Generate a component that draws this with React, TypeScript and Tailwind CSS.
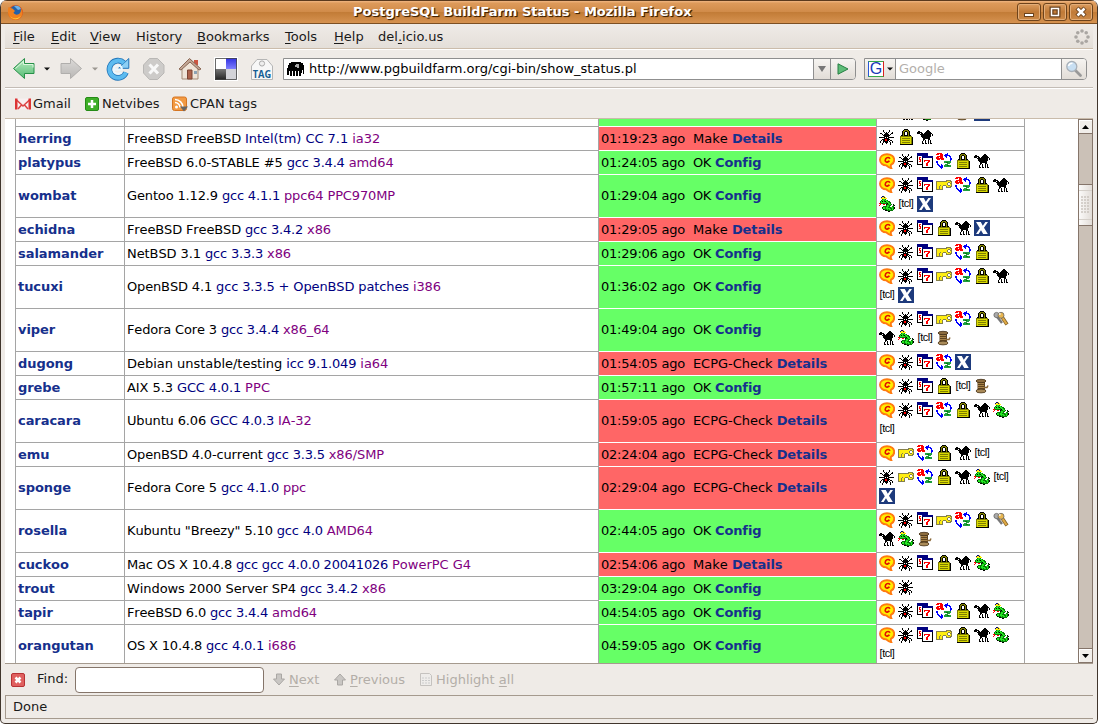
import React from "react";

type Palette = Record<string, string>;

const PALETTE: Palette = {
  "#": "#000000",
  r: "#ff0000",
  o: "#808000",
  y: "#ffee10",
  Y: "#d9d900",
  n: "#000080",
  w: "#ffffff",
  g: "#85804a",
  s: "#c0c0c0",
  b: "#0000ff",
  l: "#22e822",
  d: "#087808",
  t: "#20a040",
};

function Pixels({ rows }: { rows: string[] }) {
  const rects: React.ReactElement[] = [];
  rows.forEach((row, y) => {
    let x = 0;
    while (x < row.length) {
      const c = row[x];
      let end = x + 1;
      while (end < row.length && row[end] === c) end++;
      if (PALETTE[c]) {
        rects.push(<rect key={`${x}-${y}`} x={x} y={y} width={end - x} height={1} fill={PALETTE[c]} />);
      }
      x = end;
    }
  });
  return (
    <svg width="16" height="16" viewBox="0 0 16 16" shapeRendering="crispEdges" className="block shrink-0">
      {rects}
    </svg>
  );
}

const SPIDER = [
  "................",
  "....#.....#.....",
  "....#.....#.....",
  ".....#.#.#...#..",
  ".##...###...##..",
  "...#.#####.#....",
  "....#######.....",
  ".....#####......",
  "######.#.######.",
  ".....#####......",
  "...###rr###.....",
  "..#.##rr##.##...",
  ".#..#####.#..#..",
  ".#..#.###..#.#..",
  "...#...#...#....",
  "...#.......#....",
];

const CAMEL = [
  "................",
  "..........##....",
  ".##......####...",
  "#####...######..",
  "###.##.########.",
  "...###########.#",
  "....##########.#",
  "....##########..",
  ".....########...",
  "......#######...",
  "......##...##...",
  "......#.#..#.#..",
  ".....#..#..#.#..",
  ".....#..#..#.#..",
  ".....##.##.#.##.",
  "................",
];

const LOCK = [
  "......####......",
  ".....#oooo#.....",
  "....#oo##oo#....",
  "....#o#..#o#....",
  "....#o#..#o#....",
  "....#o#..#o#....",
  "...##o####o##...",
  "..oooooooooooo..",
  "..oYYYYYYYYYYo#.",
  "..oYooooooooYo#.",
  "..oYYYYYYYYYYo#.",
  "..oYooooooooYo#.",
  "..oYYYYYYYYYYo#.",
  "..oYooooooooYo#.",
  "..oYYYYYYYYYYo#.",
  "..#############.",
];

const CALENDAR = [
  "nnnnnnnnnnn.....",
  "nnnnnnnnnnn.....",
  "nnnnnnnnnnn.....",
  "#wwwwnnnnnnnnnnn",
  "#wrrwnnnnnnnnnnn",
  "#wrww#wwwwwwwww#",
  "#wrrw#wwwwwwwww#",
  "#wwrw#wrrrrrrww#",
  "#wrrw#wrwwwrrww#",
  "#wwww#wwwwrrwww#",
  "#wwww#wwwrrwwww#",
  "######wwwrrwwww#",
  ".....#wwwrrwwww#",
  ".....#wwwwwwwww#",
  ".....###########",
  "................",
];

const KEY = [
  "................",
  "................",
  "................",
  "..........ggggg.",
  "gggggggggggyyygg",
  "gyyyyyyyyyyyggyg",
  "gyyyyyyyyyygwwgg",
  "gyyyyyyyyyygwwyg",
  "gyyygyygggyyggyg",
  "gyygyyg...gyyygg",
  "gyygyyg...ggggg.",
  "gyygyyg.........",
  "ggggggg.........",
  "................",
  "................",
  "................",
];

const SORT = [
  ".rrrrr.....b....",
  "rrr.rrr..bbb....",
  "....rrr.bbbbbb..",
  ".rrrrrr..bb..bb.",
  "rrr.rrr...b...b.",
  "rrrrrrrr......bb",
  ".rrr.rrr......bb",
  "..............b.",
  "bb......ttttttt.",
  "bb......ttddttt.",
  ".b.........ttt..",
  ".bb..b...ttt....",
  "..bb.bb.tttddtt.",
  "...bbbb.ttttttt.",
  "....bbb.........",
  ".....b..........",
];

const SNAKE = [
  "...nny..........",
  "..nyyny.........",
  "..yyyyyy........",
  "...dlld.........",
  "..dlldlld.......",
  ".dl#ld#lldd.....",
  ".dllllldlldd....",
  "rrdddddd#lld....",
  ".r..rr.#ddlld.#.",
  "r......dlldd..d#",
  "....ddddlld..dd.",
  "...#lldlldddlld#",
  "...dlldllllddld#",
  "....#dddldlldld.",
  "......##dddddd..",
  ".........##.....",
];

function Balloon() {
  return (
    <svg width="16" height="16" viewBox="0 0 16 16" className="block shrink-0">
      <path d="M8 1.200C3.800 1.200 1 3.600 1 6.800c0 3.100 2.600 5.400 6.400 5.600 1.200 1 2.800 2.200 4.900 2.800-.5-1.100-.6-2.200-.4-3.300C14 11 15.200 9 15.200 6.800 15.200 3.600 12.200 1.200 8 1.200Z" fill="#ffee00" stroke="#ff7a10" strokeWidth="1.900" />
      <path d="M10.600 5.800c.3-1.400-2.800-2-4 .2-1 2 .1 3.400 1.700 3.100 1-.2 1.700-.7 2.100-1.300" fill="none" stroke="#e01000" strokeWidth="1.600" />
    </svg>
  );
}

function XIcon() {
  return (
    <svg width="16" height="16" viewBox="0 0 16 16" className="block shrink-0">
      <path d="M0 0h16v16H0z" fill="#1d3a7c" />
      <path d="M2 2h4.800l2 3.800L11.400 2H14l-4 5.800L13.800 14H9.200L7 10.200 4.600 14H2l3.800-5.800z" fill="#fff" />
    </svg>
  );
}

function Keys() {
  return (
    <svg width="16" height="16" viewBox="0 0 16 16" className="block shrink-0">
      <path d="M3 4.500l6 7.500" stroke="#777" strokeWidth="2.400" />
      <circle cx="3.500" cy="4" r="2.600" fill="#aaa" stroke="#666" strokeWidth=".8" />
      <path d="M9 6l5 7.500" stroke="#806028" strokeWidth="3.600" />
      <path d="M9 6l4.600 7" stroke="#e0aa45" strokeWidth="2.200" />
      <circle cx="8" cy="4.300" r="3" fill="#e8b650" stroke="#666" strokeWidth=".8" />
      <circle cx="6.800" cy="2.900" r="1" fill="#eee" />
    </svg>
  );
}

function Spool() {
  return (
    <svg width="16" height="16" viewBox="0 0 16 16" className="block shrink-0">
      <path d="M3.500 2.500H11V13H3.500z" fill="#604520" />
      <path d="M4 5h6v1H4zm0 2h6v1H4zm0 2h6v1H4z" fill="#a88348" />
      <ellipse cx="7" cy="3" rx="5" ry="1.700" fill="#8d6d3e" stroke="#443018" strokeWidth=".8" />
      <ellipse cx="7" cy="13" rx="5" ry="1.900" fill="#a98a58" stroke="#49351a" strokeWidth=".8" />
      <path d="M10 9.500h3l1-2" fill="none" stroke="#8a6838" strokeWidth="1.500" />
    </svg>
  );
}

function Tcl() {
  return (
    <span className="flex h-4 w-4 shrink-0 justify-center font-['Liberation_Sans',sans-serif] text-[11px] leading-[14px] tracking-[-0.45px] text-black">
      [tcl]
    </span>
  );
}

function Flag({ code }: { code: string }) {
  switch (code) {
    case "c": return <Balloon />;
    case "s": return <Pixels rows={SPIDER} />;
    case "d": return <Pixels rows={CALENDAR} />;
    case "k": return <Pixels rows={KEY} />;
    case "a": return <Pixels rows={SORT} />;
    case "l": return <Pixels rows={LOCK} />;
    case "p": return <Pixels rows={CAMEL} />;
    case "y": return <Pixels rows={SNAKE} />;
    case "t": return <Tcl />;
    case "x": return <XIcon />;
    case "K": return <Keys />;
    default: return <Spool />;
  }
}

/* Difference between whole-pixel and fractional glyph advances at 13px. */
const SNAP: Record<string, number> = {
  b: -0.25, c: -0.15, d: -0.25, f: 0.42, g: -0.25, h: -0.24, i: 0.39, k: 0.47, l: 0.39, m: 0.34,
  n: -0.24, p: -0.25, r: -0.34, s: 0.23, t: -0.1, u: -0.24, v: 0.31, w: 0.37, x: 0.31, y: 0.31,
  " ": -0.13, ".": -0.13, ":": -0.38, A: 0.11, B: 0.08, C: -0.07, E: -0.21, F: -0.48, G: -0.07,
  I: 0.17, K: -0.53, L: -0.24, M: -0.22, N: 0.28, O: -0.23, P: 0.16, S: -0.25, T: 0.06, U: 0.48,
  W: 0.14, X: 0.1,
};

function Snapped({ text, className }: { text: string; className?: string }) {
  let sum = 0;
  for (const ch of text) sum += /\d/.test(ch) ? -0.27 : SNAP[ch] ?? 0;
  return <span className={className} style={{ letterSpacing: `${(sum / text.length).toFixed(3)}px` }}>{text}</span>;
}

interface Member {
  name: string;
  os: string;
  compiler: string;
  arch: string;
  ago: string;
  stage: string;
  flags: string;
}

const m = (name: string, os: string, compiler: string, arch: string, ago: string, stage: string, flags: string): Member => ({
  name, os, compiler, arch, ago, stage, flags,
});

const MEMBERS: Member[] = [
  m("herring", "FreeBSD FreeBSD", "Intel(tm) CC 7.1", "ia32", "01:19:23", "Make", "slp"),
  m("platypus", "FreeBSD 6.0-STABLE #5", "gcc 3.4.4", "amd64", "01:24:05", "OK", "csdalp"),
  m("wombat", "Gentoo 1.12.9", "gcc 4.1.1", "ppc64 PPC970MP", "01:29:04", "OK", "csdkalpytx"),
  m("echidna", "FreeBSD FreeBSD", "gcc 3.4.2", "x86", "01:29:05", "Make", "csdlpx"),
  m("salamander", "NetBSD 3.1", "gcc 3.3.3", "x86", "01:29:06", "OK", "csdkal"),
  m("tucuxi", "OpenBSD 4.1", "gcc 3.3.5 + OpenBSD patches", "i386", "01:36:02", "OK", "csdkalptx"),
  m("viper", "Fedora Core 3", "gcc 3.4.4", "x86_64", "01:49:04", "OK", "csdkalKpytz"),
  m("dugong", "Debian unstable/testing", "icc 9.1.049", "ia64", "01:54:05", "ECPG-Check", "csdax"),
  m("grebe", "AIX 5.3", "GCC 4.0.1", "PPC", "01:57:11", "OK", "csdltz"),
  m("caracara", "Ubuntu 6.06", "GCC 4.0.3", "IA-32", "01:59:05", "ECPG-Check", "csdalpyt"),
  m("emu", "OpenBSD 4.0-current", "gcc 3.3.5", "x86/SMP", "02:24:04", "ECPG-Check", "ckalpt"),
  m("sponge", "Fedora Core 5", "gcc 4.1.0", "ppc", "02:29:04", "ECPG-Check", "skalpytx"),
  m("rosella", 'Kubuntu "Breezy" 5.10', "gcc 4.0", "AMD64", "02:44:05", "OK", "csdkalKpyz"),
  m("cuckoo", "Mac OS X 10.4.8", "gcc gcc 4.0.0 20041026", "PowerPC G4", "02:54:06", "Make", "csdlpy"),
  m("trout", "Windows 2000 Server SP4", "gcc 3.4.2", "x86", "03:29:04", "OK", "cs"),
  m("tapir", "FreeBSD 6.0", "gcc 3.4.4", "amd64", "04:54:05", "OK", "csdalpy"),
  m("orangutan", "OS X 10.4.8", "gcc 4.0.1", "i686", "04:59:05", "OK", "csdklpyt"),
];

function Row({ item }: { item: Member }) {
  const ok = item.stage === "OK";
  return (
    <div className={`grid shrink-0 grid-cols-[109px_474px_278px_148px_1px] ${item.flags.length > 7 ? "h-[43px]" : "h-6"}`}>
      <div className="flex items-center border-t border-l border-[#a5a5a5] pl-0.5 font-bold tracking-[-0.06px] text-[#16308c]">{item.name}</div>
      <div className="flex items-center border-t border-l border-[#a5a5a5] pl-0.5 whitespace-pre">
        <Snapped text={`${item.os} `} />
        <Snapped className="text-[#000080]" text={`${item.compiler} `} />
        <Snapped className="text-[#800080]" text={item.arch} />
      </div>
      <div className="flex border-l border-[#a5a5a5]">
        <div className={`flex flex-1 items-center border-t border-white pl-0.5 whitespace-pre ${ok ? "bg-[#66ff66]" : "bg-[#ff6666]"}`}>
          <Snapped text={`${item.ago} ago  `} />
          <Snapped text={`${item.stage} `} />
          <span className="font-bold tracking-[-0.1px] text-[#16308c]">{ok ? "Config" : "Details"}</span>
        </div>
      </div>
      <div className="flex flex-wrap content-start gap-[3px] border-t border-l border-[#a5a5a5] pt-0.5 pl-0.5">
        {item.flags.split("").map((f, i) => <Flag key={i} code={f} />)}
      </div>
      <div className="bg-[#a5a5a5]" />
    </div>
  );
}

function Firefox() {
  return (
    <svg width="17" height="17" viewBox="0 0 17 17" className="block">
      <circle cx="8.500" cy="8.500" r="7.500" fill="#e0561a" />
      <circle cx="8.800" cy="7" r="5.600" fill="#2461a8" />
      <path d="M7 2c3-1 6 0 7 3l-3 1-2-2z" fill="#6fb2e8" />
      <path d="M1.500 3c1.500 1 2.200 1 4 1.500L8 7 6.500 8.500C7.500 11 11 11.500 13 9c1-1.500 1-3 .7-4.500C16 7.500 16 11 13.500 13.800c-3 3-8.500 2.600-10.800-.6C.6 10.500.6 6 1.500 3z" fill="#f0801e" />
      <path d="M3 12c3 3.500 8 3 11-.5-2 4.500-8 5-11 .5z" fill="#ffd840" />
    </svg>
  );
}

function TitleButton({ children }: { children: React.ReactNode }) {
  return (
    <div className="flex h-[18px] w-6 items-center justify-center rounded-[3px] border border-[#6e431b] bg-linear-to-b from-[#dc9d5f] via-[#c07a37] to-[#cc8947] shadow-[inset_0_0_0_1px_#e3ad78]">
      {children}
    </div>
  );
}

function TitleBar() {
  return (
    <div className="flex h-6 shrink-0 items-center border-t border-b border-t-[#5b3a1d] border-b-[#7c4f23] bg-[linear-gradient(180deg,#f0b682_0%,#dd9a5a_10%,#d18c4a_48%,#c27c37_52%,#d69250_100%)] pr-1 pl-[6px]">
      <div className="w-[346px]"><Firefox /></div>
      <div className="flex-1 whitespace-nowrap font-bold text-white [text-shadow:1px_1px_1px_#442200,1px_1px_0_#553311]">
        PostgreSQL BuildFarm Status - Mozilla Firefox
      </div>
      <div className="flex gap-0.5">
        <TitleButton>
          <svg width="14" height="14"><path d="M2 8h10v4H2z" fill="#6b421c" /><path d="M3 9h8v2H3z" fill="#fff" /></svg>
        </TitleButton>
        <TitleButton>
          <svg width="14" height="14" fill="none"><path d="M3.500 3.500h7v7h-7z" stroke="#6b421c" strokeWidth="4" /><path d="M3.500 3.500h7v7h-7z" stroke="#fff" strokeWidth="1.500" /></svg>
        </TitleButton>
        <TitleButton>
          <svg width="14" height="14" fill="none"><path d="M3 3l8 8m0-8l-8 8" stroke="#6b421c" strokeWidth="4.500" /><path d="M3.500 3.500l7 7m0-7l-7 7" stroke="#fff" strokeWidth="2.500" /></svg>
        </TitleButton>
      </div>
    </div>
  );
}

function Hot({ before = "", k, after = "", width }: { before?: string; k: string; after?: string; width: string }) {
  return (
    <span className={`${width} whitespace-pre`}>
      {before}<span className="underline decoration-1 underline-offset-2">{k}</span>{after}
    </span>
  );
}

function MenuBar() {
  return (
    <div className="flex h-[25px] shrink-0 items-center border-b border-[#cbbcab] bg-linear-to-b from-[#efebe7] to-[#e4dfd9] pt-[2px] pr-[3px] pl-2">
      <Hot k="F" after="ile" width="w-[38px]" />
      <Hot k="E" after="dit" width="w-[39px]" />
      <Hot k="V" after="iew" width="w-[46px]" />
      <Hot before="Hi" k="s" after="tory" width="w-[61px]" />
      <Hot k="B" after="ookmarks" width="w-[88px]" />
      <Hot k="T" after="ools" width="w-[49px]" />
      <Hot k="H" after="elp" width="w-[44px]" />
      <Hot before="del" k="." after="icio.us" width="flex-1" />
      <svg width="16" height="16" viewBox="0 0 16 16" fill="#aaa6a2" className="mb-[1px]">
        <circle cx="8" cy="2" r="1.800" /><circle cx="12.200" cy="3.800" r="1.800" /><circle cx="14" cy="8" r="1.800" /><circle cx="12.200" cy="12.200" r="1.800" />
        <circle cx="8" cy="14" r="1.800" /><circle cx="3.800" cy="12.200" r="1.800" /><circle cx="2" cy="8" r="1.800" /><circle cx="3.800" cy="3.800" r="1.800" />
      </svg>
    </div>
  );
}

function Caret({ color }: { color: string }) {
  return <svg width="6" height="4" viewBox="0 0 6 4"><path d="M0 .5h6L3 3.500z" fill={color} /></svg>;
}

function NavBar() {
  return (
    <div className="flex h-[39px] shrink-0 items-center border-t border-b border-t-white border-b-[#c3bcb5] pl-[7px]">
      <svg width="24" height="24" viewBox="0 0 24 24" className="mr-2">
        <defs><linearGradient id="back" x2="0" y2="1"><stop stopColor="#b9ecc0" /><stop offset="1" stopColor="#55bb74" /></linearGradient></defs>
        <path d="M1.500 11.500 12.500 1.500v5H22v10h-9.500v5z" fill="url(#back)" stroke="#279048" strokeLinejoin="round" />
        <path d="M3.500 11.500l8-7.200v3.200H21v3" fill="none" stroke="#dcf7df" />
      </svg>
      <Caret color="#111" />
      <svg width="24" height="24" viewBox="0 0 24 24" className="ml-[9px]">
        <defs><linearGradient id="fwd" x2="0" y2="1"><stop stopColor="#dcdad8" /><stop offset="1" stopColor="#b9b7b5" /></linearGradient></defs>
        <path d="M22.500 11.500 11.500 1.500v5H2v10h9.500v5z" fill="url(#fwd)" stroke="#b0aeac" strokeLinejoin="round" />
      </svg>
      <span className="ml-[9px] flex"><Caret color="#9b9791" /></span>
      <svg width="24" height="24" viewBox="0 0 24 24" className="ml-2">
        <path d="M18 6A8.600 8.600 0 1 0 20 15.500" fill="none" stroke="#2174b8" strokeWidth="5.600" />
        <path d="M22.800 1.500v9.800H12.500z" fill="#8ccff5" stroke="#2174b8" />
        <path d="M18 6A8.600 8.600 0 1 0 20 15.500" fill="none" stroke="#5dbbf0" strokeWidth="4" />
        <path d="M7.500 12.500H16c0-3-2-4-4-4s-4.500 1.500-4.500 4.500S11 18 16 15.500" fill="none" stroke="#eaf7ff" strokeWidth="1.800" />
      </svg>
      <svg width="24" height="24" viewBox="0 0 24 24" className="ml-3">
        <path d="M7.500 1.500h8l6.500 6.500v8l-6.500 6.500h-8L1.500 16V8z" fill="#cdcbc9" stroke="#b9b7b5" />
        <path d="M7.500 7.500l8.500 9m0-9l-8.500 9" stroke="#f8f8f8" strokeWidth="3" />
      </svg>
      <svg width="24" height="24" viewBox="0 0 24 24" className="ml-3">
        <path d="M4 11v11h16V10l-8-8z" fill="#efe4d8" stroke="#a58b76" />
        <path d="M16 3h4v5h-4z" fill="#cc5540" />
        <path d="M1 12 11.500 1.500 23 12l-2 1-9-8-9 8z" fill="#c2a695" stroke="#8a6754" />
        <path d="M9.500 13h4.500v9H9.500z" fill="#ad634c" stroke="#7c4433" /><path d="M16 14h3v3h-3z" fill="#8da3b4" />
      </svg>
      <svg width="24" height="24" viewBox="0 0 24 24" className="ml-3">
        <defs>
          <linearGradient id="bl" x2="0" y2="1"><stop stopColor="#3030e0" /><stop offset="1" stopColor="#8080ff" /></linearGradient>
          <linearGradient id="bk" x2="0" y2="1"><stop stopColor="#777" /><stop offset="1" stopColor="#222" /></linearGradient>
        </defs>
        <path d="M0 0h24v24H0z" fill="#fff" /><path d="M12 1h11v11H12z" fill="url(#bl)" /><path d="M1 12h11v11H1z" fill="url(#bk)" /><path d="M12 12h11v11H12z" fill="#d3d3d8" /><path d="M1.500 1.500h21v21h-21z" fill="none" stroke="#444" strokeWidth=".8" />
      </svg>
      <svg width="24" height="24" viewBox="0 0 24 24" className="ml-3">
        <path d="M1.500 9 7 2.500h10L22.500 9v13.500h-21z" fill="#f7f7f7" stroke="#b5b5b5" />
        <circle cx="12" cy="6.500" r="2.600" fill="#eee" stroke="#aaa" />
        <text x="12" y="20.800" textAnchor="middle" textLength="18.500" lengthAdjust="spacingAndGlyphs" fontFamily="Open Sans, sans-serif" fontWeight="700" fontSize="10" fill="#155e94">TAG</text>
      </svg>
      <div className="ml-[9px] flex h-[22px] w-[573px] rounded-r-[4px] border border-[#8f8f8f] bg-white">
        <svg width="17" height="16" viewBox="0 0 17 16" className="mt-[2px] ml-[3px] block" shapeRendering="crispEdges">
          <path d="M4 1h10v1h2v2h1v9h-1V9h-1v3h-1v3h-2v-5h-1v5H9v-5H8v5H6v-5H5v5H3v-5H2v4H0V7h1V4h1V2h2z" fill="#000" />
          <path d="M9 3h3v4h-2V6H8V4h1z" fill="#aaa" />
        </svg>
        <span className="ml-[5px] flex-1 leading-5 text-black">http://www.pgbuildfarm.org/cgi-bin/show_status.pl</span>
        <span className="flex w-[17px] items-center justify-center border-l border-[#8f8f8f] bg-linear-to-b from-[#f6f4f1] to-[#e2ddd7]">
          <svg width="8" height="6"><path d="M0 0h8L4 6z" fill="#777" /></svg>
        </span>
        <span className="flex w-[25px] items-center justify-center rounded-r-[3px] border-l border-[#8f8f8f] bg-linear-to-b from-[#f6f4f1] to-[#e2ddd7]">
          <svg width="12" height="12" viewBox="0 0 12 12"><path d="M1 .8 11 6 1 11.200z" fill="#5fbd78" stroke="#277f43" /></svg>
        </span>
      </div>
      <div className="ml-2 flex h-[22px] w-[223px] rounded-r-[4px] border border-[#8f8f8f] bg-white">
        <span className="flex w-[31px] items-center gap-[3px] border-r border-[#8f8f8f] bg-linear-to-b from-[#f6f4f1] to-[#e2ddd7] pl-[3px]">
          <span className="flex h-4 w-4 items-center justify-center border border-t-[#38a848] border-r-[#d82020] border-b-[#38a848] border-l-[#2858d8] bg-white font-['Liberation_Sans',sans-serif] text-[16px] leading-none text-[#1838b8]">G</span>
          <Caret color="#111" />
        </span>
        <span className="flex-1 pl-[3px] leading-5 text-[#b3afab]">Google</span>
        <span className="flex w-[25px] items-center justify-center rounded-r-[3px] border-l border-[#8f8f8f] bg-linear-to-b from-[#f6f4f1] to-[#e2ddd7]">
          <svg width="18" height="18" viewBox="0 0 18 18"><path d="M10 10l5.500 5.500" stroke="#999" strokeWidth="2.800" strokeLinecap="round" /><circle cx="6.800" cy="6.500" r="5" fill="#c8dff2" stroke="#a8b0b8" strokeWidth="1.300" /><path d="M3.500 6c.5-2 2-2.800 4-2.800" fill="none" stroke="#fff" strokeWidth="1.500" /></svg>
        </span>
      </div>
    </div>
  );
}

function Bookmarks() {
  return (
    <div className="flex h-[31px] shrink-0 items-center border-t border-b border-t-white border-b-[#c9bbab] pl-[10px]">
      <svg width="16" height="12" viewBox="0 0 16 12"><path d="M0 .5h16v11H0z" fill="#f8f0f0" /><path d="M1 1.500 8 8l7-6.500M3 11l3.500-4M13 11 9.500 7" fill="none" stroke="#dc4545" strokeWidth="1.500" /><path d="M0 .5h2.500v11H0zM13.500.5H16v11h-2.500z" fill="#dc3535" /></svg>
      <span className="ml-[2px] w-[52px]">Gmail</span>
      <svg width="14" height="14" viewBox="0 0 14 14"><rect x=".5" y=".5" width="13" height="13" rx="1.500" fill="#3faf28" stroke="#258b16" /><path d="M7 3v8M3 7h8" stroke="#fff" strokeWidth="2.500" /></svg>
      <span className="ml-[3px] w-[70px] tracking-[0.06px]">Netvibes</span>
      <svg width="17" height="16" viewBox="0 0 17 16"><rect x=".5" y="1" width="14" height="13.500" rx="2" fill="#f29a43" stroke="#d57522" /><circle cx="4.500" cy="11" r="1.500" fill="#fff" /><path d="M3 6.500a5 5 0 0 1 5 5M3 3.500a8 8 0 0 1 8 8" fill="none" stroke="#fff" strokeWidth="1.600" /><path d="M8 10.500h8L12 15.500z" fill="#666" /></svg>
      <span className="ml-px">CPAN tags</span>
    </div>
  );
}

function ScrollBar() {
  return (
    <div className="flex w-[15px] shrink-0 flex-col border-r border-l border-[#85756a] bg-[#cbc1b7]">
      <div className="flex h-[15px] items-center justify-center border-t border-b border-[#85756a] bg-[#f1eeea] shadow-[inset_1px_1px_0_#fff]">
        <svg width="7" height="4"><path d="M0 4h7L3.500 0z" fill="#000" /></svg>
      </div>
      <div className="h-[50px]" />
      <div className="flex h-[42px] items-center justify-center border-t border-b border-[#85756a] bg-linear-to-r from-[#fbfaf9] to-[#e2ddd8] py-[5px]">
        <div className="h-[30px] w-full border-t border-b border-[#d5d0ca] py-[5px] pl-[2px]">
          <div className="h-[18px] w-[9px] bg-[radial-gradient(circle_at_1px_1px,#c4beb7_0.6px,transparent_0.9px)] bg-[length:3px_3px]" />
        </div>
      </div>
      <div className="flex-1" />
      <div className="flex h-[15px] items-center justify-center border-t border-b border-[#85756a] bg-[#f1eeea] shadow-[inset_1px_1px_0_#fff]">
        <svg width="7" height="4"><path d="M0 0h7L3.500 4z" fill="#000" /></svg>
      </div>
    </div>
  );
}

function Page() {
  return (
    <div className="flex h-[544px] shrink-0 overflow-hidden bg-white text-black [font-kerning:none]">
      <div className="flex flex-1 flex-col overflow-hidden pl-[10px]">
        <div className="grid h-[7px] shrink-0 grid-cols-[109px_474px_278px_148px_1px] overflow-hidden">
          <div className="border-l border-[#a5a5a5]" />
          <div className="border-l border-[#a5a5a5]" />
          <div className="border-l border-[#a5a5a5] bg-[#66ff66]" />
          <div className="flex items-end gap-[3px] overflow-hidden border-l border-[#a5a5a5] pb-[5px] pl-[2px]">
            <div className="w-4" /><Pixels rows={CAMEL} />
            <Pixels rows={SNAKE} /><div className="w-4" /><Spool /><XIcon />
          </div>
          <div className="bg-[#a5a5a5]" />
        </div>
        {MEMBERS.map((item) => <Row key={item.name} item={item} />)}
      </div>
      <ScrollBar />
    </div>
  );
}

function FindBar() {
  return (
    <div className="flex h-8 shrink-0 items-center border-t border-[#a59a8e] pl-[6px] text-[#b3aea8]">
      <svg width="14" height="14" viewBox="0 0 14 14"><rect x=".5" y=".5" width="13" height="13" rx="1.500" fill="#e0605f" stroke="#b73235" /><path d="M4.500 4.500l5 5m0-5l-5 5" stroke="#fff" strokeWidth="2.500" /></svg>
      <span className="mb-[2px] ml-3 w-[38px] text-[#1a1a1a]">Find:</span>
      <div className="h-[26px] w-[189px] rounded-[4px] border border-[#85756a] bg-white" />
      <svg width="12" height="13" viewBox="0 0 12 13" className="ml-[9px]"><path d="M3.500 1h5v5H11.500L6 12 .5 6h3z" fill="#c9c6c3" stroke="#aaa7a4" /></svg>
      <Hot k="N" after="ext" width="ml-1 w-[45px]" />
      <svg width="12" height="13" viewBox="0 0 12 13"><path d="M3.500 12h5V7h3L6 1 .5 7h3z" fill="#c9c6c3" stroke="#aaa7a4" /></svg>
      <Hot k="P" after="revious" width="ml-1 w-[70px]" />
      <svg width="12" height="13" viewBox="0 0 12 13"><path d="M.5.500h9l2 2v10H.5z" fill="#eeecea" stroke="#c5c2bf" /><path d="M2 5h8M2 7.500h8M2 10h8" stroke="#ccc" strokeDasharray="2 1" /></svg>
      <Hot before="Highlight " k="a" after="ll" width="ml-1" />
    </div>
  );
}

export default function App() {
  return (
    <div className="h-[724px] w-[1098px] overflow-hidden bg-white font-['DejaVu_Sans',sans-serif] text-[13px] leading-4 text-[#1a1a1a]">
      <div className="flex h-[724px] w-[1098px] flex-col overflow-hidden rounded-[7px] rounded-b-[5px] border border-t-0 border-[#40352c] bg-[#efebe7]">
        <TitleBar />
        <div className="flex flex-1 flex-col px-1">
          <MenuBar />
          <NavBar />
          <Bookmarks />
          <Page />
          <FindBar />
          <div className="flex h-6 shrink-0 items-center border border-r-0 border-[#a59a8e] pl-[7px]">Done</div>
        </div>
      </div>
    </div>
  );
}
